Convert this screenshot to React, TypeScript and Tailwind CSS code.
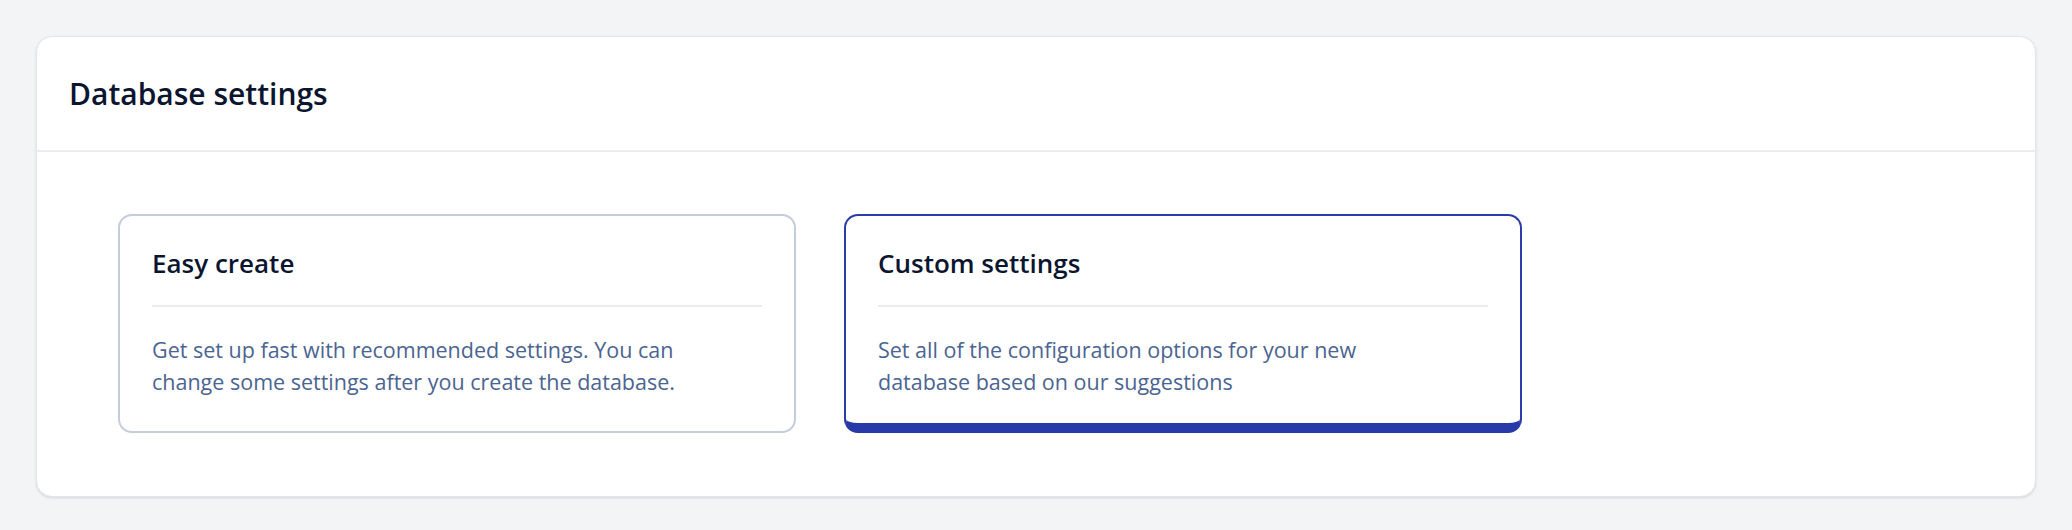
const options = [
  {
    id: 'easy',
    title: 'Easy create',
    description:
      'Get set up fast with recommended settings. You can change some settings after you create the database.',
  },
  {
    id: 'custom',
    title: 'Custom settings',
    description: 'Set all of the configuration options for your new database based on our suggestions',
  },
];

function OptionCard({
  title,
  description,
  selected,
}: {
  title: string;
  description: string;
  selected: boolean;
}) {
  return (
    <div
      className={`h-[219px] w-[678px] rounded-[14px] border-2 bg-white px-8 pt-[31px] ${
        selected ? 'border-[#2b3ca8] border-b-[10px] border-b-[#273aa8]' : 'border-[#c5cddb]'
      }`}
    >
      <h3 className="text-[26px] font-semibold leading-[32px] text-[#0b1530]">{title}</h3>
      <div className="mt-[26px] h-[2px] bg-[#e9ebf0]" />
      <p className="mt-[27px] pr-16 text-[21.5px] leading-[32px] text-[#4b6491]">{description}</p>
    </div>
  );
}

export default function App() {
  const selectedId = 'custom';

  return (
    <div
      className="min-h-screen bg-[#f3f4f6] px-9 pt-9"
      style={{ fontFamily: '"Open Sans", Lato, "Noto Sans", sans-serif' }}
    >
      <div className="rounded-2xl border border-[#e4e6ea] bg-white shadow-sm">
        <div className="flex h-[115px] items-center border-b-2 border-[#e9ebf0] px-8">
          <h2 className="text-[30px] font-semibold text-[#0b1530]">Database settings</h2>
        </div>
        <div className="flex gap-[48px] pb-[63px] pl-[81px] pt-[62px]">
          {options.map((option) => (
            <OptionCard
              key={option.id}
              title={option.title}
              description={option.description}
              selected={option.id === selectedId}
            />
          ))}
        </div>
      </div>
    </div>
  );
}
